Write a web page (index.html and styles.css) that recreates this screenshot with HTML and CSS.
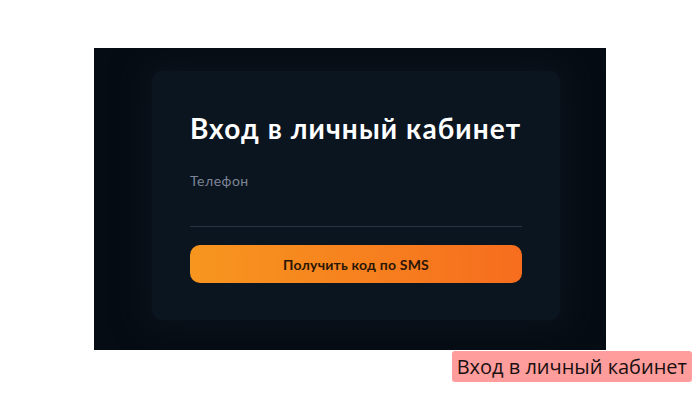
FILE: index.html
```html
<!DOCTYPE html>
<html lang="ru">
<head>
    <meta charset="UTF-8">
    <meta name="viewport" content="width=device-width, initial-scale=1.0">
    <title>Вход</title>
    <link rel="stylesheet" href="styles.css">
</head>
<body>

<!-- Login screen -->
<div class="screen">
    <div class="login-card">
        <h1>Вход в личный кабинет</h1>
        <form id="login-form">
            <label for="phone" class="field-label">Телефон</label>
            <input type="tel" id="phone" class="phone-input">
            <button type="submit" class="sms-btn">Получить код по SMS</button>
        </form>
    </div>
</div>

<!-- Caption under the screen -->
<div class="caption-row">
    <span class="caption">Вход в личный кабинет</span>
</div>

</body>
</html>
```

FILE: styles.css
```css
body {
    margin: 8px;
    background-color: #fff;
    font-family: Lato, "Open Sans", sans-serif;
}

.screen {
    width: 512px;
    height: 302px;
    margin: 40px auto 0;
    background-color: #060c13;
    padding: 23px 0 0 58px;
    box-sizing: border-box;
    overflow: hidden;
}

.login-card {
    width: 408px;
    height: 249px;
    background-color: #0b1520;
    border-radius: 10px;
    box-shadow: 0 0 30px 10px rgba(12, 20, 30, 0.8);
    padding: 40px 38px 0;
    box-sizing: border-box;
}

h1 {
    margin: 0 0 28px;
    color: #fff;
    font-size: 28px;
    font-weight: 700;
    letter-spacing: 1.1px;
    line-height: 34px;
    white-space: nowrap;
}

.field-label {
    display: block;
    color: #7d8596;
    font-size: 14px;
    letter-spacing: 0.5px;
    line-height: 16px;
}

.phone-input {
    display: block;
    width: 100%;
    height: 38px;
    margin-bottom: 18px;
    padding: 0;
    background: transparent;
    border: none;
    border-bottom: 1px solid #2a3440;
    color: #fff;
    box-sizing: border-box;
}

.sms-btn {
    display: block;
    width: 100%;
    height: 38px;
    border: none;
    border-radius: 10px;
    background: linear-gradient(90deg, #f7961f, #f66d1e);
    color: #2b1606;
    font-family: inherit;
    font-size: 14px;
    font-weight: 700;
    letter-spacing: 0.2px;
    cursor: pointer;
}

.caption-row {
    display: flex;
    justify-content: flex-end;
    margin-top: 1px;
}

.caption {
    background-color: #ff9d9d;
    color: #1a1010;
    font-family: "Open Sans", sans-serif;
    font-size: 20px;
    line-height: 31px;
    padding: 0 5px;
    border-radius: 3px;
}
```
